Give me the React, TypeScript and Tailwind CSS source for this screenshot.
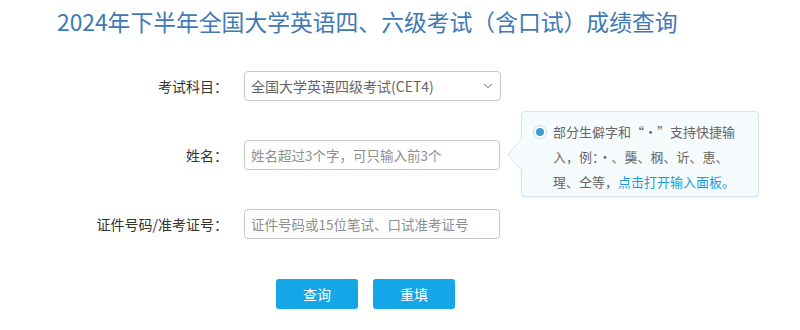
import React from "react";
import { ChevronDown } from "lucide-react";

// 成绩查询表单
export default function App() {
  return (
    <div className="relative w-[800px] h-[330px] bg-white font-['Noto_Sans_CJK_SC',sans-serif] overflow-hidden">
      <h1 className="pl-[57px] pt-[7px] text-[22.8px] leading-[30px] text-[#4079b5] font-normal">
        2024年下半年全国大学英语四、六级考试（含口试）成绩查询
      </h1>

      <div className="flex flex-col gap-[39px] mt-[34px]">
        <div className="flex items-center h-[30px]">
          <label className="w-[228px] text-right text-[14px] text-[#333]">考试科目：</label>
          <div className="ml-[16px] w-[257px] h-[30px] border border-[#c9c9c9] rounded-[4px] flex items-center justify-between pl-[6px] pr-[5px] text-[14px] text-[#666]">
            <span>全国大学英语四级考试(CET4)</span>
            <ChevronDown size={14} strokeWidth={1.6} className="text-[#555]" />
          </div>
        </div>

        <div className="flex items-center h-[30px]">
          <label className="w-[228px] text-right text-[14px] text-[#333]">姓名：</label>
          <input
            className="ml-[16px] w-[256px] h-[30px] border border-[#c9c9c9] rounded-[4px] px-[6px] text-[13.5px] text-[#555] placeholder:text-[#8f8f8f] outline-none"
            placeholder="姓名超过3个字，可只输入前3个"
          />
        </div>

        <div className="flex items-center h-[30px]">
          <label className="w-[228px] text-right text-[14px] text-[#333]">证件号码/准考证号：</label>
          <input
            className="ml-[16px] w-[256px] h-[30px] border border-[#c9c9c9] rounded-[4px] px-[6px] text-[13.5px] text-[#555] placeholder:text-[#8f8f8f] outline-none"
            placeholder="证件号码或15位笔试、口试准考证号"
          />
        </div>
      </div>

      <div className="flex gap-[15px] pl-[276px] mt-[40px]">
        <button className="w-[82px] h-[30px] rounded-[3px] bg-[#14a6e6] text-white text-[14px]">查询</button>
        <button className="w-[82px] h-[30px] rounded-[3px] bg-[#14a6e6] text-white text-[14px]">重填</button>
      </div>

      {/* 生僻字提示 */}
      <div className="absolute left-[521px] top-[111px] w-[238px] h-[86px] bg-[#f6fbfe] border border-[#d6e4ee] rounded-[4px] shadow-[0_1px_3px_rgba(0,0,0,0.06)]">
        <svg className="absolute left-[-15px] top-[25px]" width="16" height="34" viewBox="0 0 16 34">
          <polygon points="15.5,0.5 1,18 15.5,33.5" fill="#f6fbfe" />
          <polyline points="15.5,0.5 1,18 15.5,33.5" fill="none" stroke="#d6e4ee" strokeWidth="1" />
        </svg>
        <div className="absolute left-[11px] top-[13px] w-[14px] h-[14px] rounded-full bg-white border border-[#bcdcef] flex items-center justify-center">
          <div className="w-[8px] h-[8px] rounded-full bg-[#3d9ad6]" />
        </div>
        <div className="pl-[31px] pt-[7px] text-[13px] leading-[25px] text-[#666]">
          <div>部分生僻字和“·”支持快捷输</div>
          <div>入，例：·、龑、㭎、䜣、恵、</div>
          <div>
            瑆、仝等，<span className="text-[#1e9bd7]">点击打开输入面板。</span>
          </div>
        </div>
      </div>
    </div>
  );
}
